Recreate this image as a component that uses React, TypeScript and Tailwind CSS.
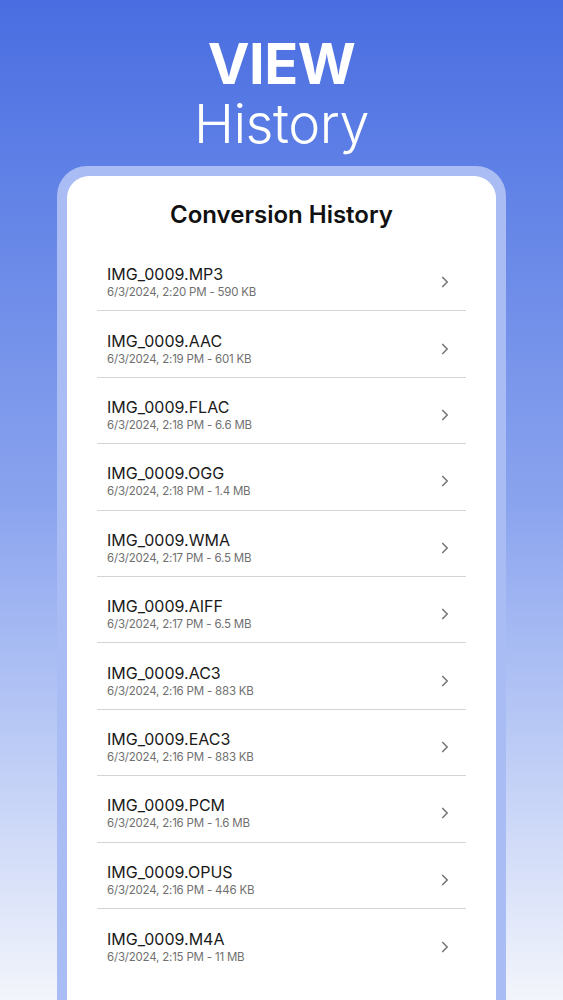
import { ChevronRight } from 'lucide-react';

const items = [
  { name: 'IMG_0009.MP3', meta: '6/3/2024, 2:20 PM - 590 KB' },
  { name: 'IMG_0009.AAC', meta: '6/3/2024, 2:19 PM - 601 KB' },
  { name: 'IMG_0009.FLAC', meta: '6/3/2024, 2:18 PM - 6.6 MB' },
  { name: 'IMG_0009.OGG', meta: '6/3/2024, 2:18 PM - 1.4 MB' },
  { name: 'IMG_0009.WMA', meta: '6/3/2024, 2:17 PM - 6.5 MB' },
  { name: 'IMG_0009.AIFF', meta: '6/3/2024, 2:17 PM - 6.5 MB' },
  { name: 'IMG_0009.AC3', meta: '6/3/2024, 2:16 PM - 883 KB' },
  { name: 'IMG_0009.EAC3', meta: '6/3/2024, 2:16 PM - 883 KB' },
  { name: 'IMG_0009.PCM', meta: '6/3/2024, 2:16 PM - 1.6 MB' },
  { name: 'IMG_0009.OPUS', meta: '6/3/2024, 2:16 PM - 446 KB' },
  { name: 'IMG_0009.M4A', meta: '6/3/2024, 2:15 PM - 11 MB' },
];

export default function App() {
  return (
    <main
      className="w-[563px] h-[1000px] overflow-hidden bg-gradient-to-b from-[#4a6de1] via-[#8aa3ee] to-[#f3f5fb] flex flex-col items-center"
      style={{ fontFamily: 'Inter, "Noto Sans", sans-serif' }}
    >
      <h1 className="mt-[32px] text-white text-center">
        <span className="block text-[56px] leading-[64px] font-bold tracking-[-0.5px]">VIEW</span>
        <span className="block text-[54px] leading-[56px] font-light tracking-[-0.5px]">History</span>
      </h1>

      <div className="mt-[14px] w-[449px] flex-1 rounded-t-[30px] bg-[#a9bcf4] px-[10px] pt-[10px]">
        <div className="h-full rounded-t-[22px] bg-white px-[30px] pt-[22px]">
          <h2 className="text-center text-[24px] leading-[34px] font-semibold text-[#111]">
            Conversion History
          </h2>
          <ul className="mt-[13px]">
            {items.map((it, i) => (
              <li
                key={it.name}
                className={`flex items-center justify-between h-[66.4px] pl-[10px] pr-[12px] pt-[9px] ${
                  i < items.length - 1 ? 'border-b border-[#d4d4d4]' : ''
                }`}
              >
                <div>
                  <div className="text-[16px] leading-[20px] text-[#1a1a1a]">{it.name}</div>
                  <div className="text-[11.5px] leading-[16px] tracking-[-0.2px] text-[#707070]">{it.meta}</div>
                </div>
                <ChevronRight className="w-[18px] h-[18px] text-[#777]" strokeWidth={2.2} />
              </li>
            ))}
          </ul>
        </div>
      </div>
    </main>
  );
}
